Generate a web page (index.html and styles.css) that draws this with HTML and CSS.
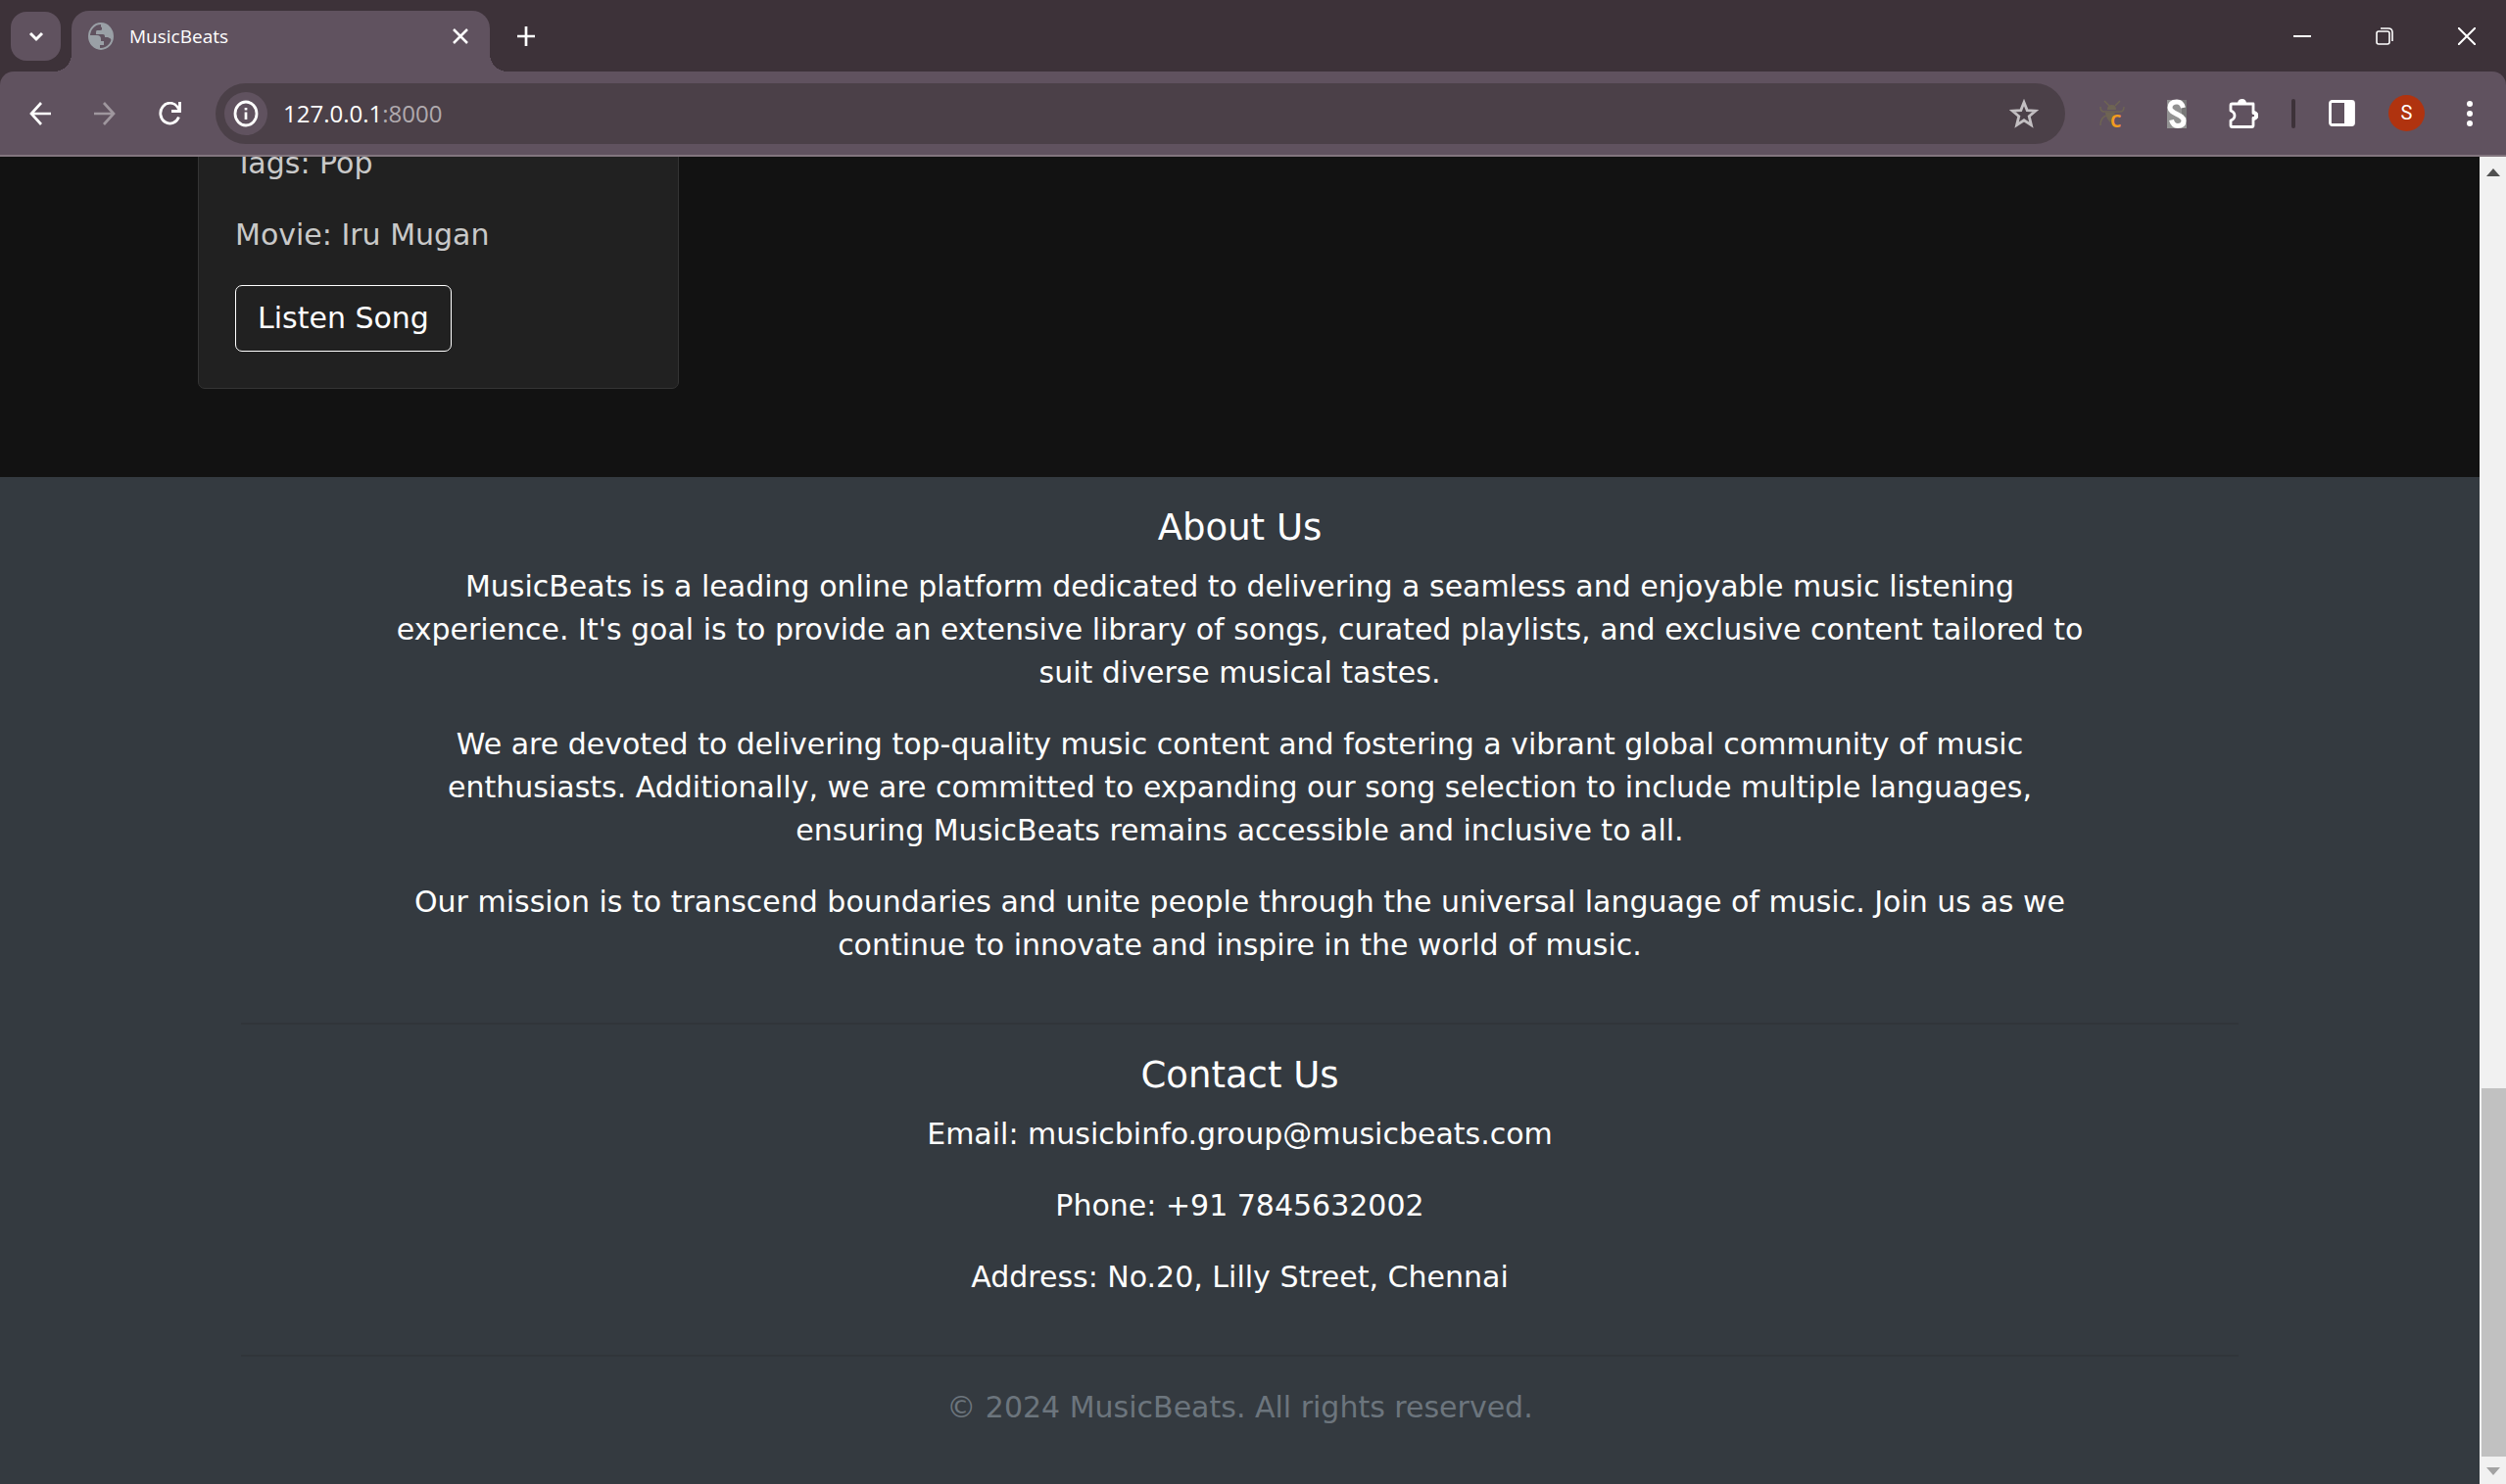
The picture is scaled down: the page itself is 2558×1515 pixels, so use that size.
FILE: index.html
```html
<!DOCTYPE html>
<html lang="en">
<head>
<meta charset="utf-8">
<title>MusicBeats</title>
<link rel="stylesheet" href="styles.css">
</head>
<body>
<div class="browser">
  <div class="tab-strip">
    <button class="tab-search" aria-label="Search tabs"><svg width="16" height="16" viewBox="0 0 16 16"><path d="M2 5l6 6 6-6" fill="none" stroke="#fff" stroke-width="3"/></svg></button>
    <div class="tab">
      <svg class="favicon" width="26" height="28" viewBox="0 0 26 28"><ellipse cx="13" cy="14" rx="12" ry="13" fill="#60525f" stroke="#9aa0a6" stroke-width="2"/><path d="M13 1v3q0 1 1 1v2q0 1-2 1H9q-1 0-1 2v2h7q2 0 2 2v1h3q3 1 4 3 2-5 0-9-3-7-11-8zM1 13h8q4 0 4 4v2h3v4h-4v4C5 27 0 20 1 13z" fill="#9aa0a6"/></svg>
      <span class="tab-title">MusicBeats</span>
      <button class="plain" aria-label="Close tab"><svg width="16" height="16" viewBox="0 0 16 16"><path d="M1 1l14 14M15 1L1 15" stroke="#fff" stroke-width="2.500"/></svg></button>
    </div>
    <button class="plain new-tab" aria-label="New tab"><svg width="18" height="20" viewBox="0 0 18 20"><path d="M9 0v20M0 10h18" stroke="#fff" stroke-width="2.700"/></svg></button>
    <div class="window-controls">
      <button class="plain" aria-label="Minimize"><svg width="18" height="18" viewBox="0 0 18 18"><path d="M0 9h18" stroke="#fff" stroke-width="2"/></svg></button>
      <button class="plain" aria-label="Restore"><svg width="18" height="18" viewBox="0 0 18 18"><g fill="none" stroke="#fff" stroke-width="1.600"><rect x="1" y="4" width="13" height="13" rx="2"/><path d="M5 1h8q4 0 4 4v9"/></g></svg></button>
      <button class="plain" aria-label="Close"><svg width="18" height="18" viewBox="0 0 18 18"><path d="M0 0l18 18M18 0L0 18" stroke="#fff" stroke-width="2"/></svg></button>
    </div>
  </div>
  <div class="toolbar">
    <div class="nav">
      <button class="plain" aria-label="Back"><svg width="22" height="24" viewBox="0 0 22 24"><path d="M22 12H2M12 1L2 12l10 11" fill="none" stroke="#fff" stroke-width="2.700"/></svg></button>
      <button class="plain" aria-label="Forward"><svg width="22" height="24" viewBox="0 0 22 24"><path d="M0 12h20M10 1l10 11-10 11" fill="none" stroke="#9f979e" stroke-width="2.700"/></svg></button>
      <button class="plain" aria-label="Reload"><svg width="23" height="24" viewBox="0 0 23 24"><path d="M20.500 15.500A9.700 10.400 0 1 1 19 5l2 3" fill="none" stroke="#fff" stroke-width="2.800"/><path d="M21.500 0v9.500H13" fill="none" stroke="#fff" stroke-width="2.800"/></svg></button>
    </div>
    <div class="address">
      <button class="site-info" aria-label="Site information"><svg width="26" height="28" viewBox="0 0 26 28"><ellipse cx="13" cy="14" rx="11" ry="12" fill="none" stroke="#fff" stroke-width="2.800"/><path d="M13 12.500v7.500M13 8v2.500" stroke="#fff" stroke-width="2.700"/></svg></button>
      <span class="url">127.0.0.1<span class="port">:8000</span></span>
      <button class="plain star" aria-label="Bookmark"><svg width="30" height="30" viewBox="0 0 30 30"><path d="M15 3.500l3.200 8.100 8.700.5-6.700 5.600 2.200 9-7.400-4.900-7.400 4.900 2.200-9-6.700-5.600 8.700-.5z" fill="none" stroke="#c3bfc2" stroke-width="2.800"/></svg></button>
    </div>
    <div class="extensions">
      <button class="plain" aria-label="Bug extension"><svg width="26" height="30" viewBox="0 0 26 30"><g fill="none" stroke="#6e6453" stroke-width="1.500"><path d="M5 2l5 5M21 2l-5 5M1 8q0 5 4 5h16q4 0 4-5M7 17q-6 2-6 10"/></g><path d="M8 11q0-5 4.500-5T17 11zM6 14h10l-5 10q-4-4-5-10z" fill="#6e6453"/><text x="11" y="29" class="bug-letter">C</text></svg></button>
      <button class="plain" aria-label="S extension"><svg width="22" height="30" viewBox="0 0 22 30"><path d="M1 1h20v29H1z" fill="#929292"/><path d="M16 1h5v18h-5z" fill="#777"/><path d="M17.500 9Q16 3 11 3 4 3 4 9c0 6 14 7 14 13q0 5.500-6 5.500-5 0-6.500-6" fill="none" stroke="#fff" stroke-width="5"/></svg></button>
      <button class="plain" aria-label="Extensions"><svg width="30" height="32" viewBox="0 0 30 32"><path d="M3.500 6H25v9.500q4 0 4 2.500t-4 2.500V28q0 1.500-1.500 1.500h-20Q2 29.500 2 28v-5q4-1.500 4-5t-4-5V7.500Q2 6 3.500 6z" fill="none" stroke="#fff" stroke-width="2.800" stroke-linejoin="round"/><path d="M9 6q0-5 4.500-5T18 6zM26 13q4 1 4 5t-4 5z" fill="#fff"/></svg></button>
      <span class="divider"></span>
      <button class="plain tight" aria-label="Side panel"><svg width="27" height="27" viewBox="0 0 27 27"><rect x="1.500" y="1.500" width="24" height="24" rx="2" fill="none" stroke="#fff" stroke-width="2.800"/><path d="M16 1h10v25H16z" fill="#fff"/></svg></button>
      <button class="avatar tight" aria-label="Profile">S</button>
      <button class="plain" aria-label="Menu"><svg width="8" height="28" viewBox="0 0 8 28"><g fill="#fff"><circle cx="4" cy="4" r="3"/><circle cx="4" cy="14" r="3"/><circle cx="4" cy="24" r="3"/></g></svg></button>
    </div>
  </div>
</div>
<div class="viewport">
  <div class="page">
    <main class="songs">
      <article class="card">
        <p>Tags: Pop</p>
        <p>Movie: Iru Mugan</p>
        <button class="listen">Listen Song</button>
      </article>
    </main>
    <footer class="footer">
      <section class="about">
        <h5>About Us</h5>
        <p>MusicBeats is a leading online platform dedicated to delivering a seamless and enjoyable music listening experience. It's goal is to provide an extensive library of songs, curated playlists, and exclusive content tailored to suit diverse musical tastes.</p>
        <p>We are devoted to delivering top-quality music content and fostering a vibrant global community of music enthusiasts. Additionally, we are committed to expanding our song selection to include multiple languages, ensuring MusicBeats remains accessible and inclusive to all.</p>
        <p>Our mission is to transcend boundaries and unite people through the universal language of music. Join us as we continue to innovate and inspire in the world of music.</p>
      </section>
      <hr>
      <section>
        <h5>Contact Us</h5>
        <p>Email: musicbinfo.group@musicbeats.com</p>
        <p>Phone: +91 7845632002</p>
        <p>Address: No.20, Lilly Street, Chennai</p>
      </section>
      <hr>
      <p class="copyright">© 2024 MusicBeats. All rights reserved.</p>
    </footer>
  </div>
  <div class="scrollbar">
    <svg width="14" height="8" viewBox="0 0 14 8"><path d="M0 8l7-8 7 8z" fill="#505050"/></svg>
    <div class="track"><div class="thumb"></div></div>
    <svg width="14" height="8" viewBox="0 0 14 8"><path d="M0 0l7 8 7-8z" fill="#a3a3a3"/></svg>
  </div>
</div>
</body>
</html>
```
FILE: styles.css
```css
* { box-sizing: border-box; }

body {
  margin: 0;
  height: 100vh;
  display: flex;
  flex-direction: column;
  overflow: hidden;
  background: #121212;
  color: #fff;
  font-family: Verdana, "DejaVu Sans", sans-serif;
  font-size: 30px;
  line-height: 44px;
}

button {
  font: inherit;
  color: inherit;
  padding: 0;
  border: 0;
  background: none;
}

svg { display: block; flex: none; }

.plain { display: flex; align-items: center; justify-content: center; }

/* Browser chrome */
.browser {
  flex: none;
  background: #3d3239;
  border-bottom: 2px solid #83767f;
  font-family: "Open Sans", "Noto Sans", sans-serif;
}

.tab-strip {
  display: flex;
  align-items: center;
  height: 73px;
  padding: 0 11px;
}

.tab-search {
  display: flex;
  align-items: center;
  justify-content: center;
  width: 51px;
  height: 50px;
  border-radius: 16px;
  background: #60525f;
}

.tab {
  position: relative;
  display: flex;
  align-items: center;
  align-self: flex-end;
  width: 427px;
  height: 62px;
  margin-left: 11px;
  padding: 0 22px 10px 17px;
  border-radius: 18px 18px 0 0;
  background: #60525f;
}

.tab::before,
.tab::after {
  content: "";
  position: absolute;
  bottom: 0;
  width: 18px;
  height: 18px;
}

.tab::before {
  right: 100%;
  background: radial-gradient(circle at 0 0, transparent 18px, #60525f 18px);
}

.tab::after {
  left: 100%;
  background: radial-gradient(circle at 100% 0, transparent 18px, #60525f 18px);
}

.tab-title {
  flex: 1;
  margin-left: 16px;
  font-size: 19px;
  line-height: 24px;
}

.new-tab { margin-left: 28px; }

.window-controls {
  display: flex;
  gap: 66px;
  margin-left: auto;
  padding-right: 20px;
}

.toolbar {
  display: flex;
  align-items: center;
  height: 85px;
  padding: 0 33px 0 30px;
  border-radius: 14px 14px 0 0;
  background: #60525f;
}

.nav { display: flex; gap: 44px; }

.address {
  flex: 1;
  display: flex;
  align-items: center;
  height: 62px;
  margin-left: 35px;
  padding: 0 27px 0 9px;
  border-radius: 31px;
  background: #4b4048;
}

.site-info {
  display: flex;
  align-items: center;
  justify-content: center;
  width: 44px;
  height: 44px;
  border-radius: 50%;
  background: #60525f;
}

.url {
  margin-left: 16px;
  font-size: 24px;
  line-height: 32px;
}

.port { color: #b0aaae; }

.star { margin-left: auto; }

.extensions {
  display: flex;
  align-items: center;
  margin-left: 35px;
}

.extensions > * + * { margin-left: 42px; }

.extensions > .tight,
.extensions > .divider { margin-left: 34px; }

.divider {
  width: 4px;
  height: 30px;
  border-radius: 2px;
  background: #3d3239;
}

.bug-letter {
  font: bold 18px "Open Sans", sans-serif;
  fill: #f39c1f;
}

.avatar {
  width: 37px;
  height: 37px;
  border-radius: 50%;
  background: #b0330f;
  font-family: Roboto, sans-serif;
  font-size: 20px;
  line-height: 37px;
}

/* Page */
.viewport {
  flex: 1;
  display: flex;
  min-height: 0;
}

.page {
  flex: 1;
  display: flex;
  flex-direction: column;
  justify-content: flex-end;
  overflow: hidden;
}

.songs {
  flex: none;
  padding: 0 202px 90px;
}

.card {
  width: 491px;
  padding: 37px;
  border: 1px solid #343434;
  border-radius: 7px;
  background: #212121;
  color: #c9c9c9;
}

p { margin: 0 0 29px; }

.listen {
  display: block;
  padding: 11px 22px;
  border: 1px solid #fff;
  border-radius: 7px;
  color: #fff;
}

.footer {
  flex: none;
  padding: 30px 246px 27px;
  background: #343a40;
  text-align: center;
}

section { display: flow-root; }

.about { padding: 0 150px; }

h5 {
  margin: 0 0 16px;
  font-size: 37px;
  font-weight: 400;
  line-height: 44px;
}

hr {
  margin: 28px 0 30px;
  border: 0;
  border-top: 2px solid #30353a;
}

.copyright { color: #6c757d; }

.scrollbar {
  flex: none;
  display: flex;
  flex-direction: column;
  align-items: center;
  gap: 11px;
  width: 27px;
  padding: 12px 0 9px;
  background: #f1f1f1;
}

.track {
  flex: 1;
  display: flex;
  align-items: flex-end;
  align-self: stretch;
  padding-left: 2px;
}

.thumb {
  width: 100%;
  height: 29%;
  background: #c1c1c1;
}
```
